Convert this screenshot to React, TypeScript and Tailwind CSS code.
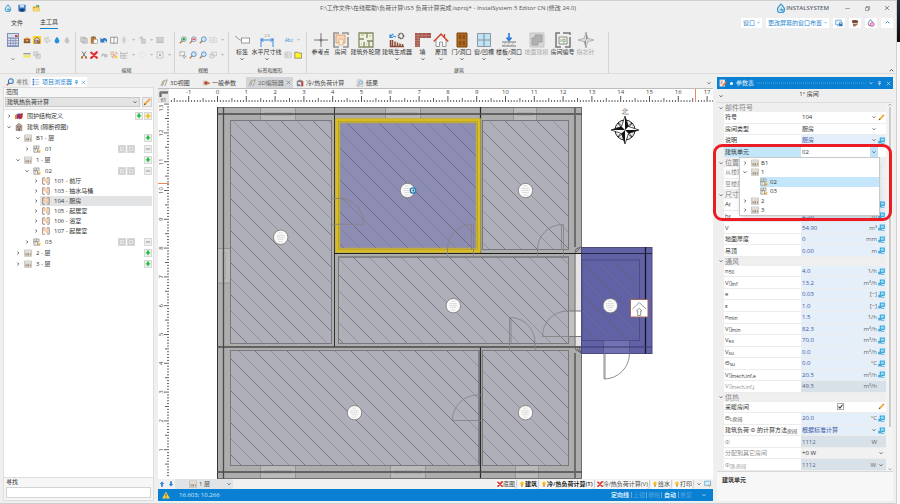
import { useState } from 'react';
import type { ReactNode } from 'react';

const FONT = "font-['Open_Sans','Noto_Sans_CJK_SC',sans-serif]";

/* ---------- icons ---------- */

const shapes: Record<string, ReactNode> = {
  drop: <path d="M5 .8C6.8 3.2 8 4.7 8 6.3a3 3 0 0 1-6 0C2 4.700 3.200 3.200 5 .8z" fill="#2292dc" />,
  dropGray: <path d="M5 .8C6.800 3.200 8 4.700 8 6.300a3 3 0 0 1-6 0C2 4.700 3.200 3.200 5 .8z" fill="#c4c4c4" />,
  logo: (
    <g fill="none" stroke="#2c93d1" strokeWidth="1.200">
      <path d="M5 1C7 3.500 8.500 4.800 8.500 6.500a3 2.800 0 0 1-7 0C1.500 4.800 3 3.500 5 1z" />
      <path d="M3.500 6.800h3.500M5.200 4.500v4M7 6v3" strokeWidth=".9" />
    </g>
  ),
  save: (
    <g>
      <rect x=".5" y="1" width="9" height="8.500" rx=".6" fill="#2c6fc0" />
      <rect x="2.200" y="1" width="5.600" height="3.400" fill="#cfe0f3" />
      <rect x="2.800" y="6.200" width="4.400" height="3.300" fill="#173a66" />
    </g>
  ),
  folder: (
    <g>
      <path d="M1 3h3l1 1h4.500v5H1z" fill="#d9a72a" />
      <path d="M2.200 5h7.600L8.600 9.200H.8z" fill="#f7d66c" />
      <path d="M5 3.200c0-2 2-2.200 3-1.400l.7-.8.3 2.700H6.500l.8-.9c-.7-.4-1.400 0-1.400.9z" fill="#35a852" />
    </g>
  ),
  trunk: (
    <g>
      <path d="M1 3l4-1.500L9 3v1H1z" fill="#e3a53d" />
      <rect x="1" y="4" width="8" height="1.200" fill="#a8342a" />
      <path d="M1 5.200h8V9H1z" fill="#8a5a2b" />
      <rect x="4" y="5.200" width="2" height="1.600" fill="#f1d189" />
    </g>
  ),
  radiator: (
    <g>
      <rect width="10" height="10" fill="#ffd21f" />
      <path d="M1.800 4.500L5 1.500l3.500 2.800V9H1.800z" fill="#d9cfc4" stroke="#5b4a3a" strokeWidth=".8" />
      <path d="M3.200 5h1v3h-1zm1.800 0h1v3H5z" fill="#5b4a3a" />
      <path d="M6.500 5.500h2V9h-2z" fill="#b8483a" />
    </g>
  ),
  fan: <path d="M1 3h5a1 1 0 1 0-1-1M1 5h7a1 1 0 1 1-1 1M2 7h3a1 1 0 1 1-1 1" fill="none" stroke="#bcbcbc" strokeWidth=".9" />,
  strip: (
    <g>
      <path d="M.5 2.500h9v1.700h-9z" fill="#999" />
      <path d="M.5 5.200h9v3h-9z" fill="#f0e75c" />
    </g>
  ),
  pages: <path d="M1 1h5v5H1zM4 4h5v5H4z" fill="#dedede" stroke="#b5b5b5" strokeWidth=".8" />,
  copy: <path d="M1 1.500h5.500v6H1zM3.500 3h5.500v6H3.500z" fill="#ddd" stroke="#a8a8a8" strokeWidth=".9" />,
  paste: (
    <g>
      <rect x="1" y="1" width="6.500" height="8.500" fill="#c0762d" />
      <rect x="3" y=".4" width="2.600" height="1.800" fill="#666" />
      <rect x="4.500" y="4" width="5" height="5.600" fill="#fafafa" stroke="#777" strokeWidth=".6" />
    </g>
  ),
  undo: <path d="M.5 2v6h6L4.600 6.200c1.500-1.300 2.900-.6 3.200 2.300C11 4 6 .5 2.500 4z" fill="#2f78c5" />,
  redo: <path d="M9.200 3v4.700H4.500L6 6.200c-1.500-1-3-.6-3.600 1.600C0 3.500 5 1.500 7.500 4.600z" fill="#bdbdbd" />,
  columns: <path d="M.8 1.500h8.400v7.500H.8zM5 1.500V9" fill="#fdfdfd" stroke="#777" strokeWidth=".9" />,
  align: <path d="M5 .5v3M5 6.500v3M3.500 3.500h3v3h-3z" fill="none" stroke="#b5b5b5" strokeWidth=".9" />,
  rotate: <path d="M4.500 1v8.500M1.500 3.500L4.500 1l2 2M6 4h3v5H6z" fill="#ddd" stroke="#b0b0b0" strokeWidth=".9" />,
  rows: <path d="M.8 2h8.400v2H.8zM.8 6h8.400v2.200H.8zM3.500 6v2M6.500 6v2" fill="#e8e8e8" stroke="#a5a5a5" strokeWidth=".8" />,
  cut: (
    <g>
      <path d="M2.500.5l3.800 6M7.500.5l-3.800 6" stroke="#666" strokeWidth="1.100" />
      <path d="M2 6.200l2 .3-.5 3H1zM8 6.200l-2 .3.500 3H9z" fill="#a66b2d" />
    </g>
  ),
  cross: (
    <g>
      <path d="M1.500 2l7 6.500M8.500 1.500l-7 7.300" stroke="#e02424" strokeWidth="2.600" strokeLinecap="round" />
      <path d="M2 2.300l6 5.500" stroke="#f0625c" strokeWidth=".7" />
    </g>
  ),
  swap: (
    <g>
      <path d="M1 1h3.500v3.500H1z" fill="#f0dfae" stroke="#b98" strokeWidth=".5" />
      <path d="M4 4h3v3H4z" fill="#e5a0a0" />
      <path d="M5.500 6H9v3H5.500z" fill="#f3ce3c" />
      <path d="M7 1l2 3M2 6l2 3" stroke="#c66" strokeWidth=".9" />
    </g>
  ),
  grid: <path d="M1 1v8h8M1 3h8V1M5 3v6M1 6h8" fill="none" stroke="#a5a5a5" strokeWidth=".8" />,
  circle: <circle cx="5" cy="5" r="3.600" fill="none" stroke="#cfcfcf" strokeWidth=".9" strokeDasharray="1 .8" />,
  select: (
    <g>
      <path d="M1.200 1.200h7.600v7.600H1.200z" fill="none" stroke="#999" strokeWidth="1" strokeDasharray="1.200 1" />
      <path d="M4 4h2v2H4z" fill="#888" />
    </g>
  ),
  zoomIn: (
    <g>
      <path d="M1 9.200l3-3.200" stroke="#b07a40" strokeWidth="1.600" />
      <circle cx="6" cy="4" r="3" fill="#d8efe0" stroke="#688" strokeWidth=".9" />
      <path d="M6 2.300v3.400M4.300 4h3.400" stroke="#159a3b" strokeWidth="1.300" />
    </g>
  ),
  zoomOut: (
    <g>
      <path d="M1 9.200l3-3.200" stroke="#b07a40" strokeWidth="1.600" />
      <circle cx="6" cy="4" r="3" fill="#f2e6ee" stroke="#779" strokeWidth=".9" />
      <path d="M4.300 4h3.400" stroke="#d02c2c" strokeWidth="1.500" />
    </g>
  ),
  zoom: (
    <g>
      <path d="M1 9.200l3-3.200" stroke="#b07a40" strokeWidth="1.600" />
      <circle cx="6" cy="4" r="3" fill="#cfe6fa" stroke="#4787c0" strokeWidth="1" />
    </g>
  ),
  zoomWin: <path d="M.8 2h8.400v6H.8zM3 4h4v2.500H3z" fill="none" stroke="#c0c0c0" strokeWidth=".9" strokeDasharray="1.500 .7" />,
  pan: <path d="M1 1h6v5H1zM5 5l4 2-1.700.6L6.500 9.500z" fill="#f2f2f2" stroke="#999" strokeWidth=".8" />,
  windows: <path d="M3.500 1.500h6v4.500h-6zM1 4h5v4.500H1z" fill="#eee" stroke="#b5b5b5" strokeWidth=".8" />,
  table: <path d="M1 1.500h8v7H1zM1 4h8M1 6.200h8M4 1.500v7" fill="#eee" stroke="#b5b5b5" strokeWidth=".7" />,
  note: <path d="M1 1.500h4l1 1h3.500V9H1z" fill="#fff12e" stroke="#555" strokeWidth=".7" />,
  pencil: (
    <g>
      <path d="M1 9l.8-2.500L7.500.8l1.700 1.700-5.700 5.700z" fill="#f3a83a" />
      <path d="M1 9l.8-2.500 1.700 1.700z" fill="#7a4a1a" />
      <path d="M7.500.8l1.700 1.700" stroke="#c77" strokeWidth="1" />
    </g>
  ),
  find: (
    <g>
      <path d="M1 9.200l3-3" stroke="#b05c30" strokeWidth="1.700" />
      <circle cx="6" cy="4" r="3" fill="#d8ebfb" stroke="#3a76b8" strokeWidth="1.300" />
    </g>
  ),
  list: (
    <g>
      <path d="M.8 1h2v2h-2zM.8 4h2v2h-2zM.8 7h2v2h-2z" fill="#3d6fc0" />
      <path d="M4 2h5M4 5h5M4 8h5" stroke="#9bb2d8" strokeWidth="1" />
    </g>
  ),
  pin: <path d="M3 1h4M3.700 1v4h2.600V1M2 5.300h6M5 5.300V9" fill="none" stroke="currentColor" strokeWidth="1.100" />,
  close: <path d="M1.500 1.500l7 7M8.500 1.500l-7 7" fill="none" stroke="currentColor" strokeWidth="1.100" />,
  minimize: <path d="M.5 5h9" stroke="#555" strokeWidth="1" />,
  restore: <path d="M1 3h6v6H1zM3 3V1h6v6H7" fill="none" stroke="#555" strokeWidth="1" />,
  books: (
    <g>
      <path d="M0 4l3-2v6L0 9z" fill="#e08a1e" />
      <path d="M2.500 3l3-1.500v6L2.500 9z" fill="#7a2ea0" />
      <path d="M5 3l3-1.500 2 .5-1 6-4 1z" fill="#c02b3b" />
      <path d="M3.500 2.500l2-1 1 1.500-2 1z" fill="#2b6fd0" />
    </g>
  ),
  house: (
    <g>
      <path d="M1.500 3L5 .6 8.500 3v6.500h-7z" fill="#b9a69c" stroke="#6b5a55" strokeWidth=".7" />
      <path d="M3 4h1.300v1.500H3zm2.700 0H7v1.500H5.700zM4.300 6.500h1.500v3H4.300z" fill="#5c4c48" />
    </g>
  ),
  floor: (
    <g>
      <path d="M.5 1.200h9v8h-9z" fill="#efece6" stroke="#a9a9a4" strokeWidth=".7" />
      <path d="M.5 3.800h9" stroke="#b5b2ac" strokeWidth=".7" />
      <path d="M1.800 5.200h1.500v3H1.800zm2.400 0h2v3h-2zm3 0h1.300v3H7.200z" fill="#8d8375" />
      <path d="M4.200 5.200h1v1.800h-1z" fill="#d9b27a" />
    </g>
  ),
  unit: (
    <g>
      <path d="M1 1.200h3.500v3H1zM1 4.200h5V9H1zM4.500 1.200H7.500V5" fill="#f4f2ec" stroke="#8a8a86" strokeWidth=".9" />
      <path d="M3 4.200v2.500M6 4.200V9" stroke="#8a8a86" strokeWidth=".8" />
      <path d="M7 6h2.500v2H7z" fill="#ead34a" />
      <path d="M6.500 8H9v1.500H6.500z" fill="#e8864a" />
    </g>
  ),
  room: (
    <g>
      <path d="M3.500 1H.8v8h3M6 1h3v8H6.500" fill="none" stroke="#8f8078" strokeWidth="1.100" />
      <path d="M2.300 2.300h5v5.200H5.500V4.800H2.300z" fill="#fdeee0" stroke="#e8a878" strokeWidth=".9" />
    </g>
  ),
  plusGreen: <path d="M3.300 1h3.400v2.600H9.200L5 8.800.8 3.600h2.500z" fill="#1fc43a" />,
  plusYellow: <path d="M3.600.8h2.800v2.800h2.800v2.800H6.400v2.800H3.600V6.400H.8V3.600h2.800z" fill="#f2bd1d" />,
  minus: <path d="M1.500 5h7" stroke="#9a9a9a" strokeWidth="1.800" />,
  boxIn: <path d="M1 1h8v8H1zM3 5h4M5 3l2 2-2 2" fill="none" stroke="#b2b2b2" strokeWidth="1" />,
  boxX: <path d="M1 1h8v8H1zM3 3l4 4M7 3L3 7" fill="none" stroke="#b2b2b2" strokeWidth="1" />,
  plan: (
    <g>
      <path d="M1 8.500L4 2l1 1-2 6M5.500 2L9 1 6 9" fill="#f6e7c2" stroke="#7b8ea8" strokeWidth=".9" />
      <path d="M2 7l4-5" stroke="#e0a53a" strokeWidth="1" />
    </g>
  ),
  params: (
    <g>
      <path d="M1 2h6v6H1z" fill="#e3c7b4" />
      <circle cx="5" cy="5" r="2.200" fill="#9c4f35" />
      <path d="M6.500 4H9.500v2.500H6.500z" fill="#d86a35" />
    </g>
  ),
  heat: (
    <g>
      <path d="M1 2.500L5 .5l4 2V9H1z" fill="#8b8787" />
      <path d="M2.500 4H7v4H2.500z" fill="#e6ecf5" />
      <path d="M6.500 3h2.500v6H6.500z" fill="#cc4838" />
      <path d="M2.500 6.500H5v1.800H2.500z" fill="#3c76bf" />
    </g>
  ),
  result: (
    <g>
      <path d="M1.500 1H7l1.500 1.500V9.200h-7z" fill="#f4f4f4" stroke="#aaa" strokeWidth=".7" />
      <circle cx="5.600" cy="4.500" r="2.200" fill="#cfe4f7" stroke="#568cc0" strokeWidth=".9" />
      <path d="M2 8.800l2-2.300" stroke="#d0763e" strokeWidth="1.200" />
    </g>
  ),
  sheet: (
    <g>
      <path d="M.8.8h6.500v8.500H.8z" fill="#f3efe9" />
      <path d="M1.800 2.500h3M1.800 4.300h3M1.800 6h2" stroke="#c66" strokeWidth=".8" />
      <path d="M4 9l.6-2L8.500 3l1.300 1.200L6 8.300z" fill="#e8713a" />
    </g>
  ),
  screen: (
    <g>
      <path d="M.8 1.500h7v5.500h-7z" fill="#e4f1fb" stroke="#4c9bd6" strokeWidth=".9" />
      <path d="M5 4.500h4.500V9H5z" fill="#3f73b8" />
      <path d="M6 5.300h2.500v1H6z" fill="#cfe0f3" />
      <path d="M2.500 8.500h2" stroke="#4c9bd6" />
    </g>
  ),
  layers: (
    <g>
      <path d="M.8 1.500h7.400v5.500H.8z" fill="#d8eefa" stroke="#4fa5d8" strokeWidth=".9" />
      <path d="M5 5l4.500 2-1.800.6L7 9.500z" fill="#e8a04a" />
    </g>
  ),
  brush: (
    <g>
      <path d="M.8 2.500C2 .8 8 .8 9.300 3L8 5H2z" fill="#7d4a35" />
      <path d="M2 5.500h6.500v1.200L5 9.300H3z" fill="#a0664a" />
      <path d="M3.500 5.800h3" stroke="#eee" strokeWidth=".7" />
    </g>
  ),
  palette: (
    <g>
      <path d="M4.500.8C6 3 7.500 4 7.500 5.800a3 2.700 0 0 1-6 0C1.500 4 3 3 4.500.8z" fill="none" stroke="#4478c4" strokeWidth="1.100" />
      <circle cx="6.500" cy="6.800" r="2.500" fill="#f0b3d4" stroke="#d24a92" strokeWidth=".9" />
    </g>
  ),
  monitor: (
    <g>
      <path d="M2.500 .8h7.200v6.200H2.500z" fill="#2aa5dc" />
      <path d="M4 2.200h4.200v3.200H4z" fill="#a5def5" />
      <path d="M.3 5.500h5v3.700h-5z" fill="#4aa9d6" />
      <path d="M5 9h4" stroke="#2a8fc0" />
    </g>
  ),
  bulb: (
    <g>
      <circle cx="5" cy="3.700" r="2.900" fill="#ffc11f" />
      <path d="M3.800 6h2.400v3.500H3.800z" fill="#b08a3a" />
    </g>
  ),
  arrowUp: <path d="M5 .8L8.800 5H6.500v4.500h-3V5H1.200z" fill="#2c84d8" />,
  arrowDown: <path d="M5 9.200L8.800 5H6.500V.5h-3V5H1.200z" fill="#2c84d8" />,
  warning: (
    <g>
      <path d="M5 .5l4.800 9H.2z" fill="#f8cf3e" />
      <path d="M5 3.500v3M5 7.300v1.200" stroke="#444" strokeWidth="1.100" />
    </g>
  ),
};

function Icon({ name, className = 'size-[8px]' }: { name: string; className?: string }) {
  return (
    <svg viewBox="0 0 10 10" className={`${className} shrink-0`} aria-hidden="true">
      {shapes[name]}
    </svg>
  );
}

const turns = { down: 'M1.500 3.500L5 7l3.500-3.500', up: 'M1.500 6.500L5 3l3.500 3.500', right: 'M3.500 1.500L7 5 3.500 8.500' };

function Chevron({ dir = 'down', className = 'size-[5px]' }: { dir?: keyof typeof turns; className?: string }) {
  return (
    <svg viewBox="0 0 10 10" className={`${className} shrink-0`} aria-hidden="true">
      <path d={turns[dir]} fill="none" stroke="currentColor" strokeWidth="2" />
    </svg>
  );
}

/* ---------- title bar and ribbon ---------- */

function TitleBar() {
  return (
    <header className="grid h-[14px] grid-cols-[1fr_auto_1fr] items-center">
      <div className="flex items-center gap-[6px] pl-[4px]">
        <button aria-label="InstalSystem"><Icon name="logo" /></button>
        <button aria-label="保存"><Icon name="save" /></button>
        <button aria-label="打开"><Icon name="folder" /></button>
      </div>
      <h1 className="whitespace-nowrap text-[#555]">
        F:\工作文件\在线帮助\负荷计算\IS5 负荷计算完成.isproj* - InstalSystem 5 Editor CN (修改 24.0)
      </h1>
      <div className="flex items-center justify-end pr-[6px]">
        <Icon name="logo" className="size-[10px]" />
        <span className="mr-[8px] text-[6px] font-semibold text-[#5b6670]">INSTALSYSTEM</span>
        <button aria-label="最小化" className="w-[20px]"><Icon name="minimize" className="mx-auto size-[5px]" /></button>
        <button aria-label="还原" className="w-[20px]"><Icon name="restore" className="mx-auto size-[5px]" /></button>
        <button aria-label="关闭" className="ml-[7px] text-[#555]"><Icon name="close" className="size-[6px]" /></button>
      </div>
    </header>
  );
}

function MenuRow() {
  return (
    <nav className="flex h-[15px] items-center justify-between pl-[11px] pr-[3px]">
      <div className="flex gap-[17px] leading-[12px] text-[#333]">
        <button className="h-[13px]">文件</button>
        <button className="h-[13px] border-b border-[#0b7fd0]">主工具</button>
      </div>
      <div className="flex gap-[4px] text-[#1f86cf]">
        <button className="flex h-[10px] items-center gap-[2px] bg-white px-[2px]">
          窗口 <Chevron className="size-[3px]" />
        </button>
        <button className="flex h-[10px] items-center gap-[2px] bg-white px-[2px]">
          更改屏幕的窗口布置 <Chevron className="size-[3px]" />
        </button>
        <button aria-label="屏幕" className="flex h-[10px] w-[12px] items-center justify-center bg-white"><Icon name="screen" /></button>
        <button aria-label="样式" className="flex h-[10px] w-[12px] items-center justify-center bg-white"><Icon name="brush" /></button>
        <button aria-label="颜色" className="flex h-[10px] w-[12px] items-center justify-center bg-white"><Icon name="palette" /></button>
        <button aria-label="收起" className="flex h-[10px] w-[12px] items-center justify-center bg-white"><Chevron dir="up" /></button>
      </div>
    </nav>
  );
}

function ToolRow({ items }: { items: string[] }) {
  return (
    <div className="flex h-[15px] items-center text-[#666]">
      {items.map((item, i) =>
        item === 'v' ? (
          <button key={i} aria-label="更多" className="flex w-[8px] justify-center"><Chevron className="size-[3px]" /></button>
        ) : (
          <button key={i} aria-label={item} className="flex w-[10px] justify-center"><Icon name={item} /></button>
        )
      )}
    </div>
  );
}

function Group({ label, className = '', children }: { label: string; className?: string; children: ReactNode }) {
  return (
    <section className={`flex flex-col justify-between border-r border-[#d4d4d4] ${className}`}>
      <div className="flex">{children}</div>
      <h2 className="text-center text-[5px] leading-[6px] text-[#444]">{label}</h2>
    </section>
  );
}

function BigTool({ label, width, menu, off, children }: { label: string; width: string; menu?: boolean; off?: boolean; children: ReactNode }) {
  return (
    <button className={`flex flex-col items-center ${width} ${off ? 'text-[#aaa]' : 'text-[#333]'}`}>
      <svg viewBox="0 0 16 16" className="size-[16px]" aria-hidden="true">{children}</svg>
      <span className="whitespace-nowrap leading-[8px]">{label}</span>
      {menu && <Chevron className="mt-[1px] size-[4px]" />}
    </button>
  );
}

function Ribbon() {
  return (
    <div className="flex h-[44px] border-b border-[#dcdcdc] pt-[2px]">
      <Group label="计算" className="w-[76px] pl-[6px]">
        <button aria-label="计算" className="flex w-[14px] flex-col items-center text-[#555]">
          <svg viewBox="0 0 14 16" className="h-[16px] w-[14px]" aria-hidden="true">
            <rect x="1" y="1" width="12" height="14" fill="#7f8fb5" />
            <rect x="2" y="2" width="10" height="3.500" fill="#d7dff0" />
            <rect x="9" y="3" width="2.500" height="2" fill="#d43a3a" />
            <path d="M2 7.500h10M2 10h10M2 12.500h10" stroke="#e4e9f4" strokeWidth="1.300" strokeDasharray="2 .7" />
          </svg>
          <Chevron className="mt-[9px] size-[4px]" />
        </button>
        <div className="pl-[2px]">
          <ToolRow items={['trunk', 'radiator', 'fan', 'drop', 'dropGray']} />
          <ToolRow items={['strip', 'pages']} />
        </div>
      </Group>
      <Group label="编辑" className="w-[99px] pl-[3px]">
        <div>
          <ToolRow items={['copy', 'paste', 'undo', 'columns', 'align', 'v', 'rotate', 'v', 'rows']} />
          <ToolRow items={['cut', 'cross', 'redo', 'swap', 'grid', 'v', 'circle', 'v', 'select', 'v']} />
        </div>
      </Group>
      <Group label="视图" className="w-[54px] pl-[3px]">
        <div>
          <ToolRow items={['zoomIn', 'zoomOut', 'zoom', 'zoomWin', 'v']} />
          <ToolRow items={['pan', 'zoom', 'zoom', 'windows', 'v']} />
        </div>
      </Group>
      <Group label="标签和图形" className="w-[78px] pl-[5px]">
        <BigTool label="标签" width="w-[16px]" menu>
          <path d="M1 4l5 4h2" fill="none" stroke="#999" />
          <rect x="7.500" y="6" width="8" height="5" fill="#fff" stroke="#999" />
        </BigTool>
        <BigTool label="水平尺寸线" width="w-[33px]" menu>
          <path d="M2 6v9M14 6v9M2 8h12M4.500 6.500L2 8l2.500 1.500M11.500 6.500L14 8l-2.500 1.500" fill="none" stroke="#3c8be0" />
          <text x="8" y="4.500" textAnchor="middle" fontSize="4" fill="#888">2.0</text>
        </BigTool>
        <div>
          <div className="flex h-[15px] items-center text-[#777]">
            <button className="w-[12px] text-center text-[5px] text-[#2c8fe0]">Abc</button>
            <Chevron className="ml-[2px] size-[3px]" />
          </div>
          <ToolRow items={['table', 'note']} />
        </div>
      </Group>
      <Group label="建筑" className="w-[302px] pl-[3px]">
        <BigTool label="参考点" width="w-[21px]">
          <path d="M8 1v14M1 8h14" stroke="#777" />
          <circle cx="8" cy="8" r="1.500" fill="#777" />
        </BigTool>
        <BigTool label="房间" width="w-[19px]">
          <path d="M6 1H1v14h5M10 15h5V5M9 1h6v2" fill="none" stroke="#929292" strokeWidth="1.600" />
          <path d="M3 3h9v8H3z" fill="#f6d9bd" stroke="#e0a273" />
          <path d="M6 7h4v6H6z" fill="#fbeedd" stroke="#e0a273" strokeWidth=".7" />
        </BigTool>
        <BigTool label="建筑外轮廓" width="w-[31px]">
          <path d="M1 1h14v14H1zM1 7h5M9 1v5M9 9h6M6 10v5M11 9v6" fill="#f0f1e2" stroke="#858a66" strokeWidth="1.300" />
          <path d="M3 3h3M11 4h2M3 12h1M8 12h1" stroke="#a9c44e" strokeWidth="1.200" />
        </BigTool>
        <BigTool label="建筑生成器" width="w-[32px]" menu>
          <path d="M1 5l3-3M1 2.500v3h3M4 4l3 1" fill="none" stroke="#2f8be0" strokeWidth="1.200" />
          <circle cx="12" cy="4" r="2.500" fill="none" stroke="#555" strokeWidth="1.600" strokeDasharray="1.300 .5" />
          <path d="M1.500 8v6.500H15M3.500 8v6M6 9.500V14M8.500 10.500V14M11 11.500V14M13.500 12v2" fill="none" stroke="#8c4a35" strokeWidth="1.500" />
        </BigTool>
        <BigTool label="墙" width="w-[19px]" menu>
          <path d="M0 1h16v5H5v9H0z" fill="#a5584c" />
          <path d="M0 3.500h16M0 6h5M0 8.500h5M0 11h5M0 13.500h5M3 1v14M7 1v5M11 1v5" stroke="#c98d83" strokeWidth=".6" />
        </BigTool>
        <BigTool label="屋顶" width="w-[18px]" menu>
          <path d="M3 8v6.500h3.500V10h3v4.500H13V8" fill="#fafafa" stroke="#9a9a9a" />
          <path d="M.8 9.500L8 2l7.200 7.500" fill="none" stroke="#c9442d" strokeWidth="1.500" />
          <path d="M11.500 2v3.500" stroke="#c9442d" strokeWidth="1.300" />
        </BigTool>
        <BigTool label="门/洞口" width="w-[23px]" menu>
          <path d="M3 1h10v14H3z" fill="#b0681f" stroke="#7d4511" />
          <path d="M5 3h2.300v4H5zm3.700 0H11v4H8.700zM5 9h2.300v4H5zm3.700 0H11v4H8.700z" fill="#8c4f14" />
        </BigTool>
        <BigTool label="窗/凹槽" width="w-[22px]" menu>
          <path d="M1.500 1.500h13v13h-13z" fill="#bfe3f7" stroke="#8a98a3" />
          <path d="M8 1.500v13M1.500 8h13" stroke="#8a98a3" strokeWidth="1.200" />
        </BigTool>
        <BigTool label="楼板/洞口" width="w-[28px]" menu>
          <path d="M8 1v7M5.500 5.500L8 8.500l2.500-3" fill="none" stroke="#2676dc" strokeWidth="1.600" />
          <path d="M1 10h14M1 14h14" stroke="#777" />
          <path d="M2 14l3-4M6 14l3-4M10 14l3-4" stroke="#999" strokeWidth=".7" />
        </BigTool>
        <BigTool label="地面建模" width="w-[27px]" off>
          <path d="M1 1h14v14H1z" fill="#d8d8d8" stroke="#c4c4c4" />
          <path d="M6 3h7v7H9v3H3V6h3z" fill="#b0b0b0" stroke="#9f9f9f" />
        </BigTool>
        <BigTool label="房间编号" width="w-[25px]">
          <path d="M5 1H1v14h5M10 15h5V5M8 1h7v2" fill="none" stroke="#777" strokeWidth="1.500" />
          <path d="M4 5h8v7H4z" fill="#fafafa" stroke="#888" />
          <path d="M6 7v3M8 7h2v3H8z" stroke="#8a7" fill="none" />
        </BigTool>
        <BigTool label="指北针" width="w-[21px]" off>
          <path d="M8 0l1.700 6.300L16 8l-6.300 1.700L8 16 6.300 9.700 0 8l6.300-1.700z" fill="#ddd" stroke="#9d9d9d" strokeWidth=".7" />
          <path d="M8 0v8l1.700-1.700zM8 16V8l-1.700 1.700z" fill="#8f8f8f" />
        </BigTool>
      </Group>
      <button aria-label="收起功能区" className="ml-auto mr-[2px] self-end text-[#555]"><Chevron dir="up" /></button>
    </div>
  );
}

/* ---------- project browser ---------- */

type Node = { level: number; icon: string; label: string; open?: boolean; tools?: string[]; active?: boolean };

const nodes: Node[] = [
  { level: 0, icon: 'books', label: '围护结构定义', tools: ['plusGreen', 'plusYellow'] },
  { level: 0, icon: 'house', label: '建筑 (隔断视图)', open: true },
  { level: 1, icon: 'floor', label: 'B1 - 层', open: true, tools: ['plusGreen'] },
  { level: 2, icon: 'unit', label: '01', tools: ['boxIn', 'boxX', '', 'minus'] },
  { level: 1, icon: 'floor', label: '1 - 层', open: true, tools: ['plusGreen'] },
  { level: 2, icon: 'unit', label: '02', open: true, tools: ['boxIn', 'boxX', '', 'minus'] },
  { level: 3, icon: 'room', label: '101 - 前厅' },
  { level: 3, icon: 'room', label: '103 - 抽水马桶' },
  { level: 3, icon: 'room', label: '104 - 厨房', active: true },
  { level: 3, icon: 'room', label: '105 - 起居室' },
  { level: 3, icon: 'room', label: '106 - 浴室' },
  { level: 3, icon: 'room', label: '107 - 起居室' },
  { level: 2, icon: 'unit', label: '03', tools: ['boxIn', 'boxX', '', 'minus'] },
  { level: 1, icon: 'floor', label: '2 - 层', tools: ['plusGreen'] },
  { level: 1, icon: 'floor', label: '3 - 层', tools: ['plusGreen'] },
];

const indents = ['pl-[2px]', 'pl-[11px]', 'pl-[20px]', 'pl-[29px]'];

function ProjectBrowser() {
  return (
    <aside className="flex w-[151px] shrink-0 flex-col text-[#333]">
      <div className="flex h-[10px] items-center">
        <button className="flex items-center gap-[2px] px-[3px] text-[#777]"><Icon name="find" /> 寻找</button>
        <div className="flex h-[10px] items-center gap-[2px] bg-white px-[1px] text-[#1f86cf]">
          <button className="flex items-center gap-[2px]"><Icon name="list" /> 项目浏览器</button>
          <button aria-label="固定"><Icon name="pin" className="size-[5px]" /></button>
          <button aria-label="关闭"><Icon name="close" className="size-[5px]" /></button>
        </div>
      </div>
      <div className="flex flex-1 flex-col border border-[#dedede] bg-[#f6f6f6]">
        <label htmlFor="scope" className="pl-[2px] leading-[9px]">范围</label>
        <div className="flex gap-[2px] pb-[2px] pl-[1px] pr-[1px]">
          <div className="flex h-[10px] flex-1 items-center border border-[#c9c9c9] bg-[#e3e3e3] pr-[2px]">
            <select id="scope" className="min-w-0 flex-1 appearance-none bg-transparent pl-[1px] leading-[8px] outline-none">
              <option>建筑热负荷计算</option>
            </select>
            <Chevron className="pointer-events-none size-[4px]" />
          </div>
          <button aria-label="编辑" className="flex size-[10px] items-center justify-center border border-[#cfcfcf] bg-[#ececec]">
            <Icon name="pencil" />
          </button>
        </div>
        <ul className="flex-1 border-t border-[#e3e3e3] bg-white">
          {nodes.map((n) => (
            <li key={n.label} className={`flex items-center pr-[1px] ${n.level === 3 ? 'h-[10px]' : 'h-[11px]'} ${indents[n.level]}`}>
              <button aria-label="展开" className="flex w-[6px] justify-center"><Chevron dir={n.open ? 'down' : 'right'} className="size-[4px]" /></button>
              <button className={`ml-[1px] flex h-full flex-1 items-center gap-[4px] whitespace-nowrap pl-[2px] text-left ${n.active ? 'bg-[#e2e3e4]' : ''}`}>
                <Icon name={n.icon} /> {n.label}
              </button>
              <span className="flex gap-[1px]">
                {n.tools?.map((t, i) =>
                  t ? (
                    <button key={i} aria-label={t} className="flex size-[8px] items-center justify-center border border-[#d8d8d8] bg-[#eeeeee]">
                      <Icon name={t} className="size-[6px]" />
                    </button>
                  ) : (
                    <span key={i} className="w-[7px]" />
                  )
                )}
              </span>
            </li>
          ))}
        </ul>
        <div className="flex flex-col border-t border-[#dedede] px-[2px] pb-[2px]">
          <label htmlFor="find" className="leading-[9px]">寻找</label>
          <input id="find" className="h-[11px] w-full border border-[#d4d4d4] bg-white px-[2px] outline-none" />
        </div>
      </div>
    </aside>
  );
}

/* ---------- drawing area ---------- */

const STEP = 28.8;
const range = (from: number, to: number) => Array.from({ length: to - from + 1 }, (_, i) => from + i);

function TopRuler() {
  return (
    <svg className="h-[14px] min-w-0 flex-1 bg-white" aria-hidden="true">
      {range(-16, 174).map((t) => {
        const x = 48.5 + (t * STEP) / 10;
        const top = t % 10 === 0 ? 7 : t % 5 === 0 ? 9 : 11;
        return <path key={t} d={`M${x} ${top}V13`} stroke="#555" strokeWidth={t % 10 === 0 ? 1 : 0.9} />;
      })}
      {range(-1, 17).map((n) => (
        <text key={n} x={48.5 + n * STEP} y="5" textAnchor="middle" fontSize="6" fill="#444">{n}</text>
      ))}
      <path d="M526.500 0v13" stroke="#e58a5c" />
    </svg>
  );
}

function SideRuler() {
  return (
    <svg className="w-[11px] shrink-0 bg-white" aria-hidden="true">
      {range(1, 130).map((t) => {
        const y = 375.5 - (t * STEP) / 10;
        const left = t % 10 === 0 ? 6 : t % 5 === 0 ? 7 : 9;
        return <path key={t} d={`M${left} ${y}H11`} stroke="#555" strokeWidth=".9" />;
      })}
      {/* the topmost number is kept inside the ruler */}
      {range(1, 13).map((n) => (
        <text key={n} transform={`translate(5 ${Math.max(5, 375.5 - n * STEP)}) rotate(-90)`} textAnchor="middle" fontSize="6" fill="#444">{n}</text>
      ))}
      <path d="M0 80.500h11" stroke="#e58a5c" />
    </svg>
  );
}

const rooms = [
  [230.5, 120.5, 101, 223],
  [482.5, 120.5, 86, 129],
  [338.5, 257, 230, 86.5],
  [230.5, 350.5, 248.5, 115],
  [482.5, 350.5, 86, 115],
];

const openings = [
  [260.5, 107.5, 35, 13],
  [385.5, 107.5, 35, 13],
  [513.5, 107.5, 23, 13],
  [260.5, 465.5, 35, 13],
  [390.5, 465.5, 35, 13],
  [515.5, 465.5, 23, 13],
  [217.5, 248.5, 13, 34.5],
];

const badges = [
  [280.7, 237.3],
  [407.5, 190.5],
  [525.5, 190.5],
  [453.3, 305.7],
  [610.3, 305.7],
  [354.5, 412.7],
  [525.5, 412.7],
];

function FloorPlan() {
  return (
    <svg className="min-h-[375px] min-w-0 flex-1 bg-white" role="img" aria-label="1 层平面图">
      <defs>
        <pattern id="hatch" width="32" height="32" patternUnits="userSpaceOnUse">
          <path d="M-2 -2l36 36" stroke="#62626f" strokeWidth=".9" opacity=".8" />
          <path d="M14 -2l20 20M-2 14l20 20" stroke="#70707c" strokeWidth=".8" opacity=".6" />
        </pattern>
      </defs>
      <g transform="translate(-169 -103)">
        <rect x="217" y="107" width="365" height="371.500" fill="#adadad" />
        {openings.map(([x, y, w, h]) => (
          <g key={`${x}-${y}`}>
            <rect x={x} y={y} width={w} height={h} fill="#bababa" stroke="#868686" strokeWidth=".7" />
            {w > h ? (
              <path d={`M${x + 4} ${y + 5}h${w - 8}v3h${8 - w}z`} fill="none" stroke="#a2a2a2" strokeWidth=".6" />
            ) : (
              <path d={`M${x + 5} ${y + 4}v${h - 8}h3v${8 - h}z`} fill="none" stroke="#a2a2a2" strokeWidth=".6" />
            )}
          </g>
        ))}
        {rooms.map(([x, y, w, h]) => (
          <g key={`${x}-${y}`} stroke="#77777c">
            <rect x={x} y={y} width={w} height={h} fill="#afafba" />
            <rect x={x} y={y} width={w} height={h} fill="url(#hatch)" />
          </g>
        ))}

        {/* wall axes */}
        <path d="M217 107.500h365M581.500 107v140M581.500 353v125.500M217 478.500h365" fill="none" stroke="#707070" />
        <path d="M217.500 107v371.500M334.500 107v240" stroke="#333" />
        <path d="M480.500 107v146M480.500 347v131" stroke="#2a2a2a" strokeWidth="1.200" />
        <path d="M223.500 107v371.500M217 114h365M217 472h365M217 347h365" stroke="#4a4a4a" strokeWidth="1.300" />
        <path d="M575 107v140M575 353v125" stroke="#666" strokeWidth="1.800" />
        <path d="M334 253.500h248" stroke="#1c1c1c" />

        {/* selected room */}
        <rect x="338" y="121" width="140" height="129" fill="#8d8db3" />
        <rect x="338" y="121" width="140" height="129" fill="url(#hatch)" />
        <rect x="337.700" y="120.700" width="140.600" height="129.600" fill="none" stroke="#b5a24a" strokeWidth="5.600" opacity=".6" />
        <rect x="337.500" y="120.500" width="141" height="130" fill="none" stroke="#d8bc24" strokeWidth="4" />
        <rect x="338.500" y="121.500" width="139" height="128" fill="none" stroke="#b39a1f" strokeWidth=".6" />

        {/* passage to the porch */}
        <rect x="575.500" y="254" width="6" height="92" fill="#e4e4e4" />
        <rect x="575.500" y="311" width="6" height="26" fill="#fff" />
        <rect x="569" y="311" width="6" height="25.500" fill="#c2c2c2" />
        <path d="M575 254v92M569 311h13M569 336.500h13" fill="none" stroke="#777" />
        <path d="M575 253l1-4 5-2M576 252l4-4M575 347l1 3 5 3M577 349l4 3M579 347l2 6" fill="none" stroke="#555" strokeWidth=".8" />

        {/* porch */}
        <rect x="581.500" y="247.500" width="70.500" height="106" fill="#6161a6" stroke="#4b4b7c" />
        <rect x="582" y="260" width="57.500" height="80.500" fill="url(#hatch)" stroke="#4c4c86" />
        <path d="M645.500 247v106.500" stroke="#16162a" strokeWidth="1.300" />
        <path d="M581 253.500h71" stroke="#252545" />
        <rect x="603.500" y="340.500" width="26" height="13" fill="#7272b2" stroke="#4c4c86" strokeWidth=".7" />
        <path d="M581 347h71" stroke="#3a3a68" />

        {/* doors */}
        <g fill="none" stroke="#838388" strokeWidth=".9">
          <path d="M331 198.500h8a25.500 25.500 0 0 1 25 25.800h-33" />
          <path d="M473.500 256v-32h-2a25 25 0 0 0-24 26v6M471.500 224v26" />
          <path d="M563.500 257v-32.500h-2a25 25 0 0 0-24 25.500v7M561.500 225v25" />
          <path d="M509.500 350v-32.500h2a25 25 0 0 1 23.500 26v6.500M511 318v25" />
          <path d="M569 311h-2a25 25 0 0 0-24.500 25.500H569" />
          <path d="M482 395h-4a25 25 0 0 0-25.500 25.500H482" />
          <path d="M604 353.500v25.500a25.500 25.500 0 0 0 25.500-25.500M605 354v25" />
        </g>

        {badges.map(([x, y]) => (
          <g key={`${x}-${y}`}>
            <circle cx={x} cy={y} r="7.200" fill="#fafafa" stroke="#77716c" strokeWidth=".8" />
            <path
              d={`M${x - 2} ${y - 4.5}h4M${x - 4} ${y - 2}h8M${x - 4} ${y}h8M${x - 3} ${y + 2}h6M${x - 2} ${y + 4.5}h4`}
              stroke="#c9c9c9" strokeWidth=".9" strokeDasharray="1.300 .5"
            />
          </g>
        ))}
        <circle cx="413" cy="190.500" r="2.700" fill="#cfe9f6" stroke="#2d7fae" strokeWidth="1.300" />
        <circle cx="413.300" cy="190.500" r="1" fill="#2d5f86" />

        <rect x="630.500" y="299.500" width="17.500" height="17.500" fill="#fff" stroke="#a3635f" />
        <path d="M632.500 309l6.700-6.500 6.800 6.500M636.500 311l2.700-2.800 2.800 2.800h-1.300v4.500h-3V311z" fill="none" stroke="#8b8b8b" strokeWidth=".9" />

        {/* north arrow */}
        <text x="625" y="114" textAnchor="middle" fontSize="7" fill="#777">北</text>
        <circle cx="625" cy="130" r="10" fill="none" stroke="#222" strokeWidth="1" />
        <circle cx="625" cy="130" r="8.500" fill="none" stroke="#999" strokeWidth=".5" />
        <path d="M632 123l-5 7 5 7-7-5-7 5 5-7-5-7 7 5z" fill="#fff" stroke="#111" strokeWidth=".7" />
        <path d="M625 116l3.500 10.500L639 130l-10.500 3.500L625 144l-3.500-10.500L611 130l10.500-3.500z" fill="#fff" stroke="#111" strokeWidth=".7" />
        <path d="M625 116v14l3.500-3.500zM639 130h-14l3.500 3.500zM625 144v-14l-3.500 3.500zM611 130h14l-3.500-3.500z" fill="#111" />
      </g>
    </svg>
  );
}

const layers = [
  { icon: 'cross', label: '底图' },
  { icon: 'bulb', label: '建筑', on: true },
  { icon: 'bulb', label: '冷/热负荷计算(T)', on: true },
  { icon: 'cross', label: '冷/热负荷计算(V)' },
  { icon: 'bulb', label: '给水' },
  { icon: 'bulb', label: '打印' },
];

function Editor() {
  return (
    <main className="flex min-w-0 flex-1 flex-col text-[#444]">
      <div className="flex h-[11px] items-center">
        <button className="flex w-[40px] items-center gap-[2px] pl-[2px]"><Icon name="plan" /> 3D视图</button>
        <button className="flex w-[48px] items-center gap-[2px] pl-[4px]"><Icon name="params" /> 一般参数</button>
        <div className="flex h-[11px] w-[47px] items-center justify-between bg-[#d3d5d9] pl-[2px] pr-[2px] text-[#666]">
          <button className="flex items-center gap-[2px]"><Icon name="plan" /> 2D编辑器</button>
          <button aria-label="关闭"><Icon name="close" className="size-[5px]" /></button>
        </div>
        <button className="flex w-[61px] items-center gap-[2px] pl-[3px]"><Icon name="heat" /> 冷/热负荷计算</button>
        <button className="flex items-center gap-[2px] pl-[2px]"><Icon name="result" /> 结果</button>
        <button aria-label="更多标签" className="ml-auto mr-[2px]"><Chevron className="size-[4px]" /></button>
      </div>
      <div className="flex border-t border-[#bdbdbd]">
        <div className="flex h-[14px] w-[11px] flex-col items-center justify-end bg-[#e6e6e6] text-[5px] leading-[6px]">
          <svg viewBox="0 0 9 6" className="h-[6px] w-[9px]" aria-hidden="true">
            <path d="M1 6V1h8M1 3h2M1 5h2M4 1v2M6 1v2M8 1v2" fill="none" stroke="#444" />
          </svg>
          61
        </div>
        <TopRuler />
      </div>
      <div className="flex flex-1">
        <SideRuler />
        <FloorPlan />
      </div>
      <div className="flex h-[10px] items-center justify-between bg-[#f0f0f0]">
        <div className="flex h-full items-center">
          <button aria-label="上一层" className="flex w-[8px] justify-center"><Icon name="arrowUp" className="size-[6px]" /></button>
          <button aria-label="下一层" className="flex w-[9px] justify-center"><Icon name="arrowDown" className="size-[6px]" /></button>
          <div className="flex h-full w-[58px] items-center bg-[#e1e4e7] pl-[14px] pr-[2px]">
            <Icon name="floor" />
            <select aria-label="楼层" className="ml-[2px] min-w-0 flex-1 appearance-none bg-transparent leading-[8px] outline-none">
              <option>1 层</option>
            </select>
            <Chevron className="pointer-events-none size-[4px]" />
          </div>
        </div>
        <div className="flex items-center gap-px pr-[1px]">
          {layers.map((l) => (
            <button key={l.label} className={`flex h-[9px] items-center whitespace-nowrap rounded-br-[4px] border-r border-[#ccc] bg-[#f8f8f8] px-px ${l.on ? 'font-semibold text-[#222]' : ''}`}>
              <Icon name={l.icon} className="size-[6px]" /> {l.label}
            </button>
          ))}
          <Chevron className="mx-[2px] size-[4px]" />
          <Icon name="layers" />
        </div>
      </div>
      <footer className="flex h-[12px] items-center bg-[#0a80d3] pl-[4px] pr-[7px] text-[#d6ebfa]">
        <Icon name="warning" />
        <span className="ml-[9px]">16.603; 10.266</span>
        <div className="ml-auto flex items-center divide-x divide-[#62abe0] leading-[6px]">
          <button className="px-[2px] font-semibold">定向线</button>
          <button className="px-[1px] text-[#4ea2df]">上锁</button>
          <button className="px-[1px] text-[#4ea2df]">栅格</button>
          <button className="px-[2px] font-semibold">自动</button>
          <button className="px-[1px] text-[#4ea2df]">重复</button>
        </div>
        <Chevron className="ml-[9px] size-[4px]" />
      </footer>
    </main>
  );
}

/* ---------- property table ---------- */

type Prop = {
  name: string;
  sub?: string;
  value?: string;
  unit?: string;
  kind?: 'select' | 'check';
  tone?: 'plain' | 'blue' | 'locked' | 'active' | 'gray';
  end?: 'monitor' | 'pencil';
};

const sections: { title: string; rows: Prop[] }[] = [
  {
    title: '部件符号',
    rows: [
      { name: '符号', value: '104', kind: 'select', tone: 'plain', end: 'pencil' },
      { name: '房间类型', value: '厨房', kind: 'select', tone: 'plain' },
      { name: '说明', value: '厨房', kind: 'select', end: 'monitor' },
      { name: '建筑单元', value: '02', kind: 'select', tone: 'active' },
    ],
  },
  {
    title: '位置',
    rows: [
      { name: '从楼层', value: '1', tone: 'gray' },
      { name: '至楼层', value: '1', tone: 'gray' },
    ],
  },
  {
    title: '尺寸',
    rows: [
      { name: 'A', sub: 'f', value: '21.96', unit: 'm²', end: 'monitor' },
      { name: 'h', sub: 'f', value: '2.50', unit: 'm', end: 'monitor' },
      { name: 'V', value: '54.90', unit: 'm³', end: 'monitor' },
      { name: '地面厚度', value: '0', unit: 'mm', end: 'monitor' },
      { name: '吊顶', value: '0.00', unit: 'm', end: 'monitor' },
    ],
  },
  {
    title: '通风',
    rows: [
      { name: 'n', sub: '50', value: '4.0', unit: '1/h', end: 'monitor' },
      { name: 'V▯', sub: 'inf', value: '13.2', unit: 'm³/h', end: 'monitor' },
      { name: 'e', value: '0.03', unit: '[−]', end: 'monitor' },
      { name: 'ε', value: '1.0', unit: '[−]', end: 'monitor' },
      { name: 'n', sub: 'min', value: '1.5', unit: '1/h', end: 'monitor' },
      { name: 'V▯', sub: 'min', value: '82.3', unit: 'm³/h', end: 'monitor' },
      { name: 'V', sub: 'ex', value: '70.0', unit: 'm³/h', end: 'monitor' },
      { name: 'V', sub: 'su', value: '0.0', unit: 'm³/h', end: 'monitor' },
      { name: 'Θ', sub: 'su', value: '0.0', unit: '°C', end: 'monitor' },
      { name: 'V▯', sub: 'mech,inf,e', value: '20.5', unit: 'm³/h', end: 'monitor' },
      { name: 'V▯', sub: 'mech,inf,j', value: '49.5', unit: 'm³/h', tone: 'locked' },
    ],
  },
  {
    title: '供热',
    rows: [
      { name: '采暖房间', kind: 'check', tone: 'plain', end: 'pencil' },
      { name: 'Θ', sub: 'i,房间', value: '20.0', unit: '°C', end: 'monitor' },
      { name: '建筑负荷 Φ 的计算方法', sub: '房间', value: '根据标准计算', kind: 'select', end: 'monitor' },
      { name: 'Φ', value: '1112', unit: 'W', tone: 'locked' },
      { name: '分配到其它房间', value: '+0 W', kind: 'select', tone: 'gray' },
      { name: 'Φ', sub: '顶,房间', value: '1112', unit: 'W', kind: 'select', tone: 'locked' },
    ],
  },
];

const tones = {
  plain: 'bg-white text-[#333]',
  active: 'bg-white text-[#333]',
  blue: 'bg-[#e4eff9] text-[#3f55a3]',
  locked: 'bg-[#d9e1e8] text-[#55648e]',
  gray: 'bg-[#f1f1f1] text-[#333]',
};

function PropRow({ row, id }: { row: Prop; id: string }) {
  const tone = row.tone ?? 'blue';
  const dim = tone === 'locked' || tone === 'gray';
  const select = row.kind === 'select';
  return (
    <div className="ml-[7px] flex flex-1 border-b border-[#ececec]">
      <label
        htmlFor={id}
        className={`flex w-[77px] shrink-0 items-center whitespace-nowrap pl-px ${tone === 'active' ? 'bg-[#c3e6fa]' : 'bg-white'} ${dim ? 'text-[#8c8c8c]' : ''}`}
      >
        {row.name}
        {row.sub && <span className="pt-[3px] text-[5px] leading-[5px]">{row.sub}</span>}
      </label>
      <div className={`flex min-w-0 flex-1 items-center pl-px pr-px ${tones[tone]}`}>
        {row.kind === 'check' && (
          <span className="relative mx-auto flex size-[7px]">
            <input id={id} type="checkbox" defaultChecked className="peer size-[7px] appearance-none border border-[#aaa] bg-white" />
            <svg viewBox="0 0 6 6" className="pointer-events-none absolute inset-0 hidden peer-checked:block" aria-hidden="true">
              <path d="M1.300 3l1.200 1.400L4.800 1.500" fill="none" stroke="#333" strokeWidth=".9" />
            </svg>
          </span>
        )}
        {select && (
          <select id={id} className="min-w-0 flex-1 appearance-none bg-transparent leading-[8px] outline-none">
            <option>{row.value}</option>
          </select>
        )}
        {!row.kind && <input id={id} defaultValue={row.value} className="h-[8px] w-0 min-w-0 flex-1 bg-transparent outline-none" />}
        {row.unit && <span className={`text-[#666] ${tone === 'locked' && !select ? 'mr-[8px]' : 'mr-px'}`}>{row.unit}</span>}
        {select && (
          <span className={`pointer-events-none flex h-full w-[8px] items-center justify-center text-[#444] ${tone === 'active' ? 'mr-[7px] bg-[#bfe3f8]' : tone === 'plain' && !row.end ? 'mr-[7px]' : ''}`}>
            <Chevron className="size-[4px]" />
          </span>
        )}
        {row.end && <Icon name={row.end} className="size-[7px]" />}
      </div>
    </div>
  );
}

const units = [
  { label: 'B1', icon: 'floor' },
  { label: '1', icon: 'floor', open: true },
  { label: '02', icon: 'unit', leaf: true },
  { label: '03', icon: 'unit', leaf: true },
  { label: '2', icon: 'floor' },
  { label: '3', icon: 'floor' },
];

function UnitMenu() {
  const [picked, setPicked] = useState('02');
  return (
    <ul className="absolute left-[22px] right-[13px] top-[80px] z-10 flex h-[59px] flex-col border border-[#c8c8c8] bg-white shadow-md">
      {units.map((u) => (
        <li key={u.label} className={`flex flex-1 ${u.leaf ? 'pl-[20px]' : 'pl-[3px]'}`}>
          <button
            onClick={() => setPicked(u.label)}
            className={`flex flex-1 items-center gap-[2px] leading-[8px] ${picked === u.label ? 'bg-[#c3e6fa]' : ''}`}
          >
            {!u.leaf && <Chevron dir={u.open ? 'down' : 'right'} className="mr-[2px] size-[4px]" />}
            <Icon name={u.icon} /> {u.label}
          </button>
        </li>
      ))}
    </ul>
  );
}

function PropertyTable() {
  return (
    <aside className="relative flex w-[176px] shrink-0 flex-col bg-[#efefef] text-[#333]">
      <div className="flex h-[12px] items-center gap-[3px] bg-[#0a80d3] px-[2px] text-[#e3f1fb]">
        <Icon name="sheet" />
        <span className="size-[3px] rounded-full bg-white" />
        <span>参数表</span>
        <span className="h-[2px] flex-1 border-y border-dotted border-[#2d93da]" />
        <button aria-label="菜单"><Chevron className="size-[4px]" /></button>
        <button aria-label="固定" className="mx-px"><Icon name="pin" className="size-[5px]" /></button>
        <button aria-label="关闭"><Icon name="close" className="size-[5px]" /></button>
      </div>
      <div className="flex h-[14px] items-center border-b border-[#dcdcdc] px-[2px]">
        <Chevron className="size-[4px]" />
        <span className="flex-1 pb-[3px] pl-[4px] text-center">1° 房间</span>
      </div>
      <div className="flex flex-1">
        <div className="flex min-w-0 flex-1 flex-col">
          {sections.map((s, i) => (
            <div key={s.title} className="contents">
              <h3 className="flex h-[9px] items-center gap-[2px] pl-[2px] text-[7px] leading-[9px] text-[#888]">
                <Chevron className="size-[4px] text-[#444]" /> {s.title}
              </h3>
              {s.rows.map((r, j) => <PropRow key={j} row={r} id={`p${i}-${j}`} />)}
            </div>
          ))}
        </div>
        <div className="flex w-[7px] flex-col items-center justify-between bg-[#f3f3f3] text-[#888]">
          <Chevron dir="up" className="size-[4px]" />
          <span className="mb-[40px] w-[2px] flex-1 bg-[#cbcbcb]" />
          <Chevron className="size-[4px]" />
        </div>
      </div>
      <p className="h-[30px] border-t border-[#d8d8d8] bg-[#f7f7f7] pl-[5px] pt-[4px] font-semibold">建筑单元</p>
      <UnitMenu />
      <div className="pointer-events-none absolute -left-[4px] right-px top-[67px] z-20 h-[77px] rounded-[9px] border-[3px] border-[#ea1c26]" />
    </aside>
  );
}

export default function App() {
  return (
    <div className={`flex min-h-screen bg-[#f8f8f8] text-[6px] leading-[8px] ${FONT}`}>
      <div className="flex min-w-0 flex-1 flex-col border-b border-r border-t border-[#cfcfcf] bg-[#efefef]">
        <TitleBar />
        <MenuRow />
        <Ribbon />
        <div className="flex flex-1 gap-[4px] px-[3px] pb-[2px] pt-[3px]">
          <ProjectBrowser />
          <Editor />
          <PropertyTable />
        </div>
      </div>
      <div className="w-[3px] shrink-0">
        <div className="h-[42px] bg-linear-to-b from-[#2b2f3c] to-[#0c0c0e]" />
      </div>
    </div>
  );
}
